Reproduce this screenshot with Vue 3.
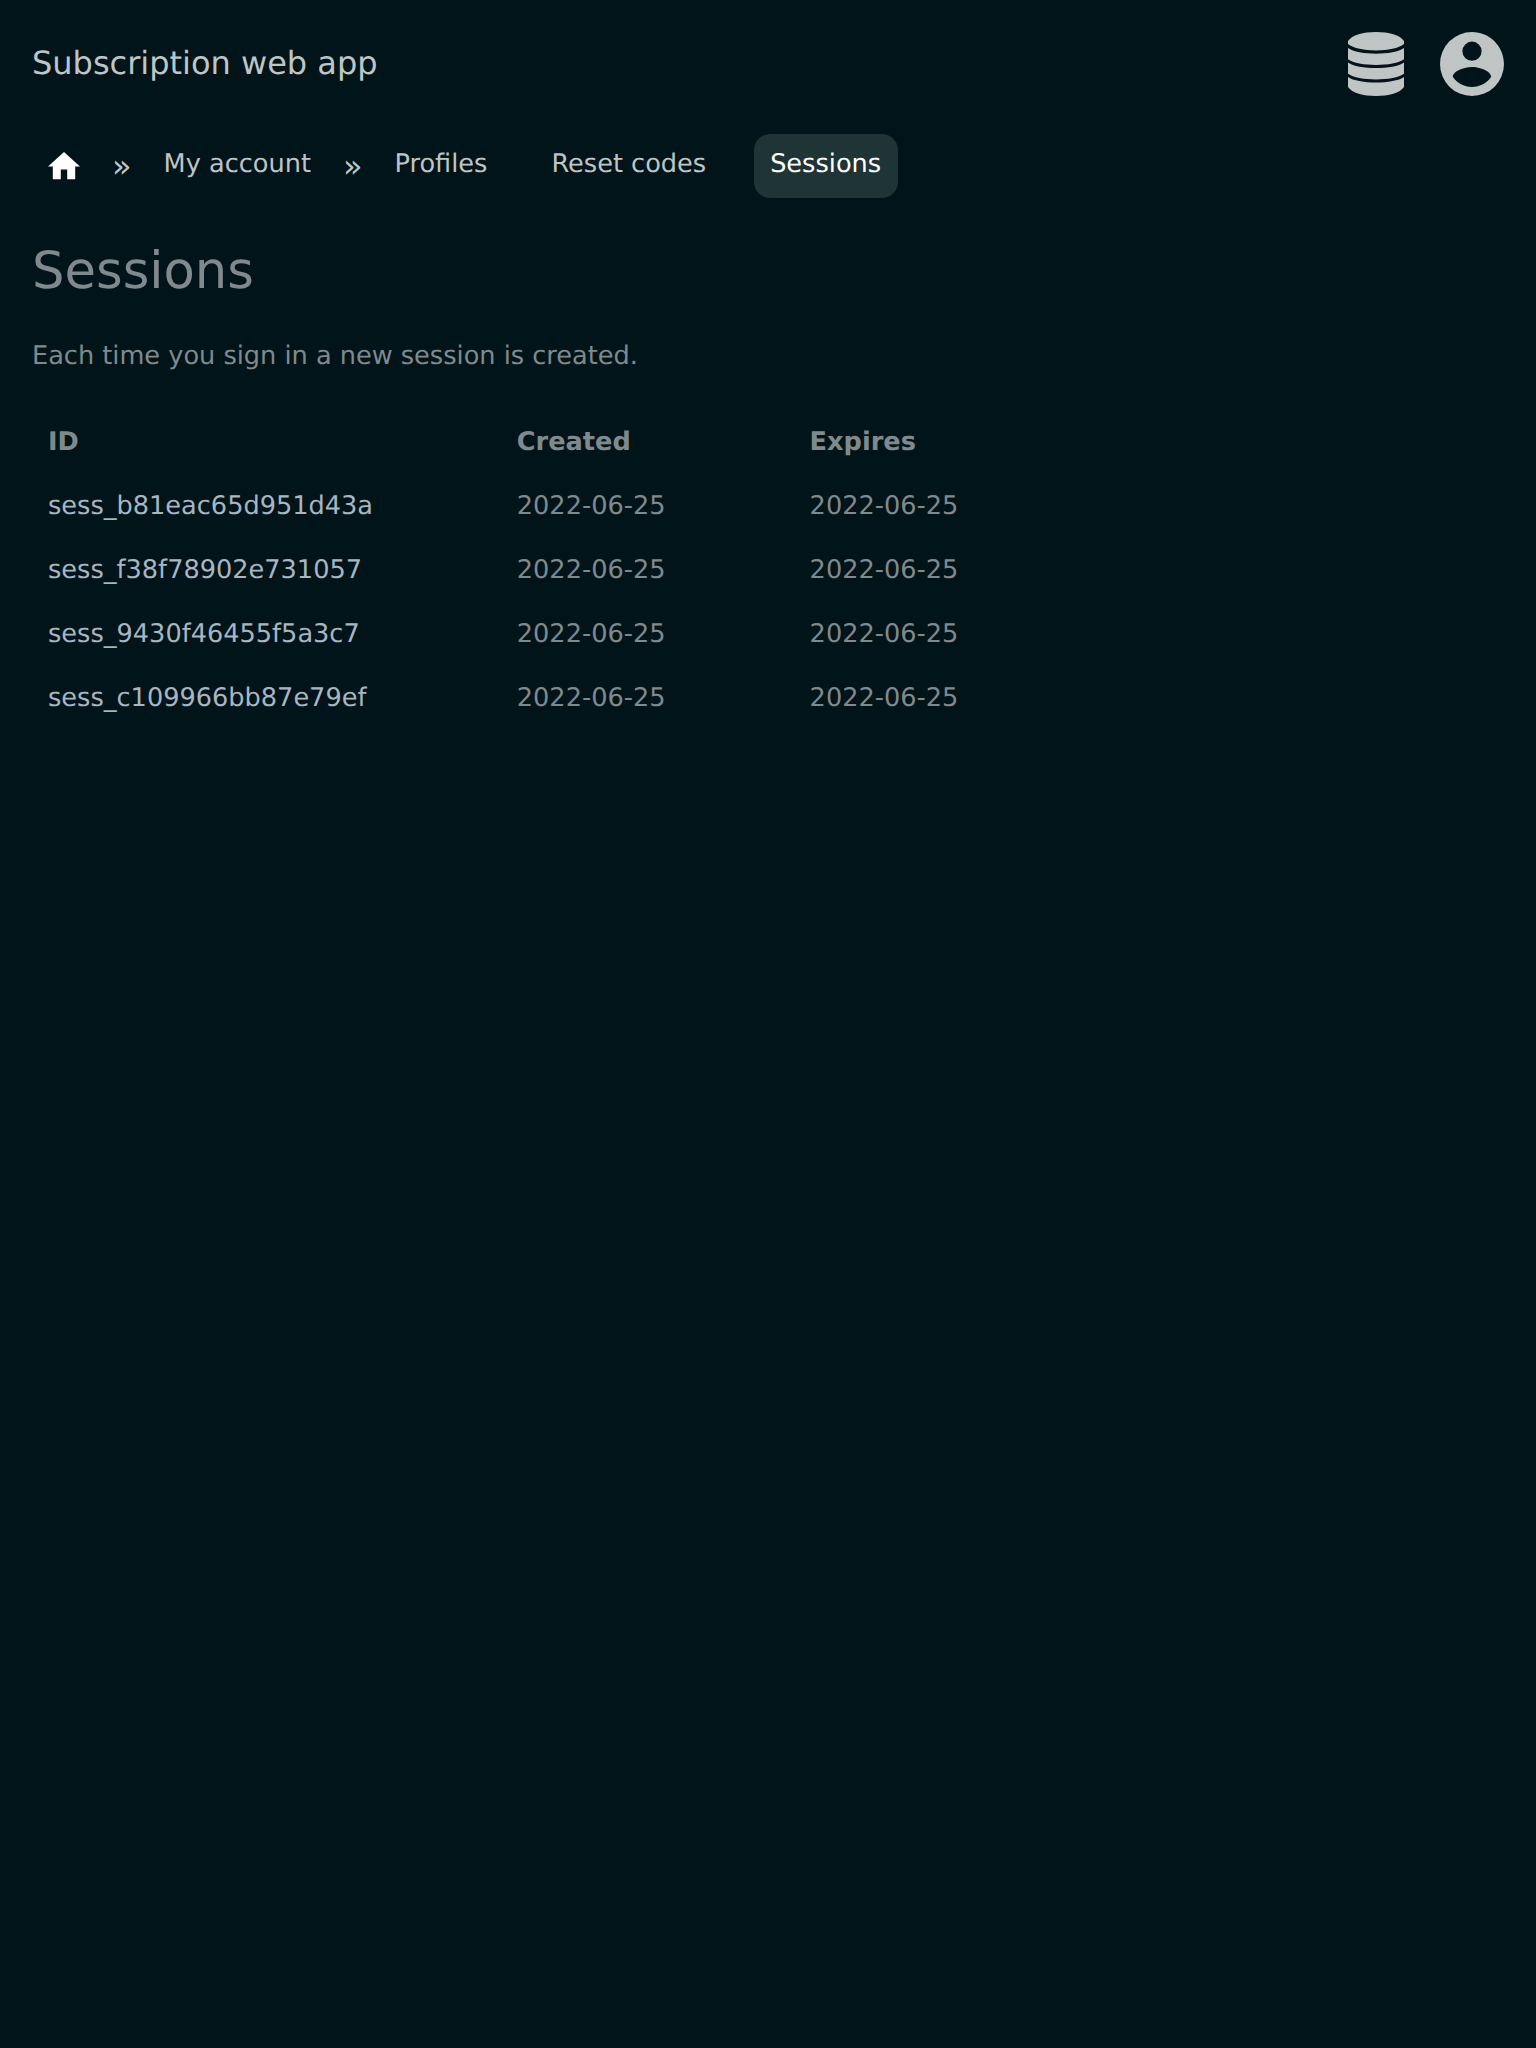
<script setup>
const sessions = [
  'sess_b81eac65d951d43a',
  'sess_f38f78902e731057',
  'sess_9430f46455f5a3c7',
  'sess_c109966bb87e79ef',
]
</script>

<template>
  <div class="page">
    <header class="top">
      <a class="brand">Subscription web app</a>
      <div class="tools">
        <svg class="db" viewBox="0 0 56 64">
          <path d="M0 12V9C4 3 15 0 28 0S52 3 56 9V12C46 20.500 10 20.500 0 12Z" />
          <path d="M0 16C10 23.600 46 23.600 56 16V27.300C46 34.900 10 34.900 0 27.300Z" />
          <path d="M0 30.500C10 37.900 46 37.900 56 30.500V41.800C46 49.400 10 49.400 0 41.800Z" />
          <path d="M0 45C10 52.300 46 52.300 56 45V55C52 61 41 64 28 64S4 61 0 55Z" />
        </svg>
        <svg class="user" viewBox="2 2 20 20">
          <path d="M12 19.200C9.500 19.200 7.290 17.920 6 16C6.030 14 10 12.900 12 12.900S17.970 14 18 16C16.710 17.920 14.500 19.200 12 19.200M12 5A3 3 0 0 1 15 8A3 3 0 0 1 12 11A3 3 0 0 1 9 8A3 3 0 0 1 12 5M12 2A10 10 0 0 0 2 12A10 10 0 0 0 12 22A10 10 0 0 0 22 12C22 6.470 17.500 2 12 2Z" />
        </svg>
      </div>
    </header>

    <nav class="crumbs">
      <a class="home">
        <svg viewBox="2 3 20 17"><path d="M10 20v-6h4v6h5v-8h3L12 3 2 12h3v8z" /></svg>
      </a>
      <span class="sep">»</span>
      <a class="item">My account</a>
      <span class="sep">»</span>
      <a class="item">Profiles</a>
      <a class="item gap">Reset codes</a>
      <a class="item gap active">Sessions</a>
    </nav>

    <main>
      <h1>Sessions</h1>
      <p>Each time you sign in a new session is created.</p>
      <table>
        <thead>
          <tr><th class="id">ID</th><th class="date">Created</th><th class="date">Expires</th></tr>
        </thead>
        <tbody>
          <tr v-for="id in sessions" :key="id">
            <td><a>{{ id }}</a></td>
            <td>2022-06-25</td>
            <td>2022-06-25</td>
          </tr>
        </tbody>
      </table>
    </main>
  </div>
</template>

<style>
body {
  background: #001419;
}
</style>

<style scoped>
.page {
  box-sizing: border-box;
  min-height: 2048px;
  padding: 32px;
  background: #001419;
  color: #80898c;
  font: 25.600px/32px "DejaVu Sans", sans-serif;
  text-rendering: geometricPrecision;
}
.top {
  display: flex;
  justify-content: space-between;
  height: 64px;
}
.brand {
  font-size: 32px;
  line-height: 62px;
  color: #bfc4c5;
}
.tools {
  display: flex;
  gap: 36px;
  fill: #bfc4c5;
}
.db {
  width: 56px;
  height: 64px;
}
.user {
  width: 64px;
  height: 64px;
}
.crumbs {
  display: flex;
  height: 64px;
  margin-top: 38px;
  color: #bfc4c5;
}
.home {
  width: 32px;
  padding: 18.400px 16px 0;
}
.home svg {
  display: block;
  width: 32px;
  height: 27.200px;
  fill: #fff;
}
.sep {
  width: 51.600px;
  font-size: 32px;
  line-height: 64px;
  text-align: center;
}
.item {
  padding: 0 16px;
  line-height: 60px;
  border-radius: 16px;
}
.gap {
  margin-left: 32px;
}
.active {
  padding-right: 16.500px;
  background: #1f3435;
  color: #fff;
}
h1 {
  margin: 41px 0 0;
  font-size: 51.200px;
  line-height: 64px;
  font-weight: 400;
}
p {
  margin: 37px 0 0;
}
table {
  margin-top: 38px;
  border-collapse: collapse;
  table-layout: fixed;
}
th,
td {
  height: 64px;
  padding: 0 16px;
  text-align: left;
}
.id {
  width: 436.800px;
}
.date {
  width: 260.800px;
}
td a {
  color: #a9b5c1;
}
</style>
